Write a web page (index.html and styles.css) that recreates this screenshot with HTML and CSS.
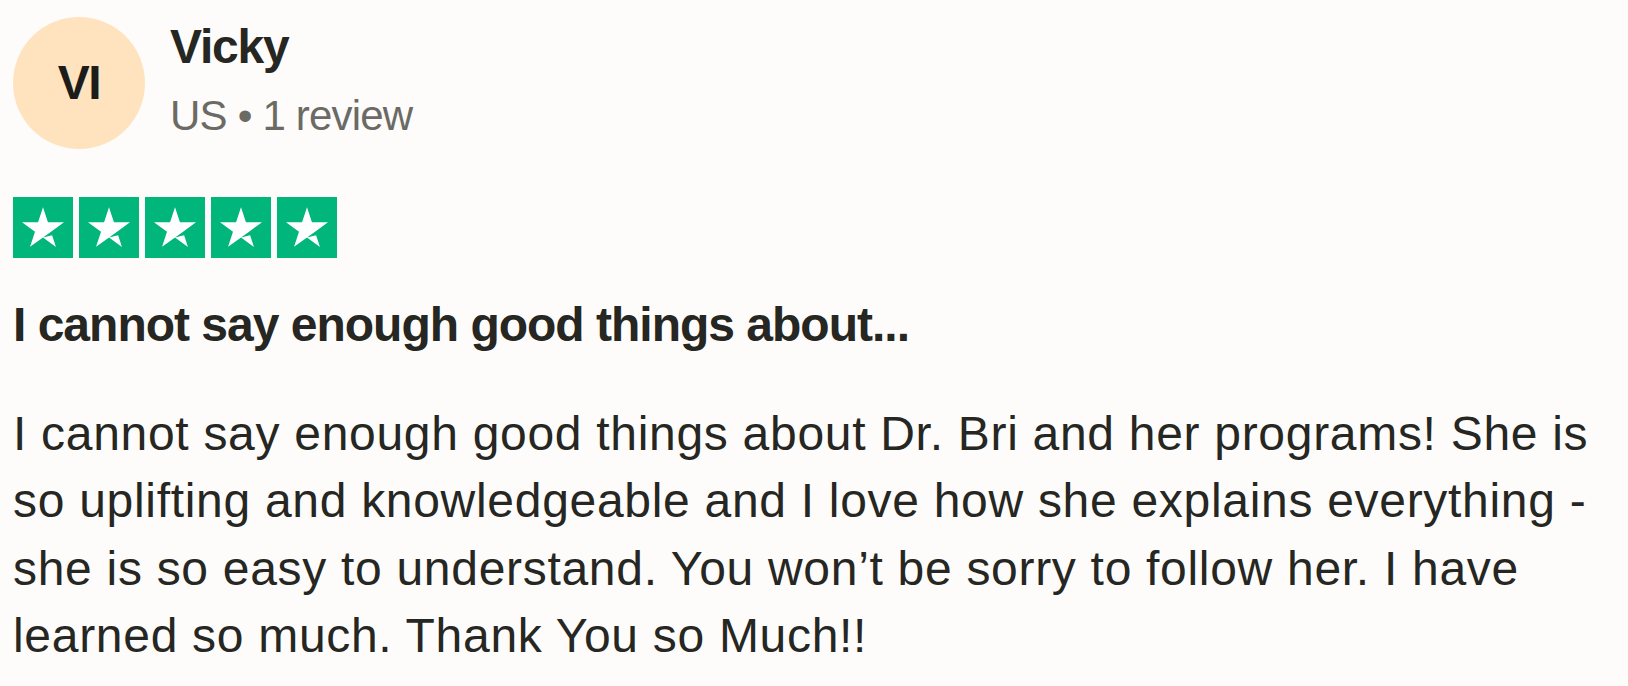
FILE: index.html
```
<!DOCTYPE html>
<html lang="en">
<head>
<meta charset="utf-8">
<title>Review by Vicky</title>
<link rel="stylesheet" href="styles.css">
</head>
<body>
<article class="review">
  <header class="consumer">
    <div class="avatar"><span>VI</span></div>
    <div class="consumer-info">
      <span class="name">Vicky</span>
      <span class="meta">US <span class="dot">•</span> 1 review</span>
    </div>
  </header>
  <div class="stars" aria-label="Rated 5 out of 5 stars">
    <span class="star"><svg viewBox="0 0 96 96"><path d="M48 64.7l14.6-3.7 6.1 18.8L48 64.7zm33.6-24.3H55.9L48 16.2l-7.9 24.2H14.4l20.8 15-7.9 24.2 20.8-15 12.8-9.2 20.7-15z"/></svg></span>
    <span class="star"><svg viewBox="0 0 96 96"><path d="M48 64.7l14.6-3.7 6.1 18.8L48 64.7zm33.6-24.3H55.9L48 16.2l-7.9 24.2H14.4l20.8 15-7.9 24.2 20.8-15 12.8-9.2 20.7-15z"/></svg></span>
    <span class="star"><svg viewBox="0 0 96 96"><path d="M48 64.7l14.6-3.7 6.1 18.8L48 64.7zm33.6-24.3H55.9L48 16.2l-7.9 24.2H14.4l20.8 15-7.9 24.2 20.8-15 12.8-9.2 20.7-15z"/></svg></span>
    <span class="star"><svg viewBox="0 0 96 96"><path d="M48 64.7l14.6-3.7 6.1 18.8L48 64.7zm33.6-24.3H55.9L48 16.2l-7.9 24.2H14.4l20.8 15-7.9 24.2 20.8-15 12.8-9.2 20.7-15z"/></svg></span>
    <span class="star"><svg viewBox="0 0 96 96"><path d="M48 64.7l14.6-3.7 6.1 18.8L48 64.7zm33.6-24.3H55.9L48 16.2l-7.9 24.2H14.4l20.8 15-7.9 24.2 20.8-15 12.8-9.2 20.7-15z"/></svg></span>
  </div>
  <h2 class="title">I cannot say enough good things about...</h2>
  <p class="text">I cannot say enough good things about Dr. Bri and her programs! She is so uplifting and knowledgeable and I love how she explains everything - she is so easy to understand. You won’t be sorry to follow her. I have learned so much. Thank You so Much!!</p>
</article>
</body>
</html>
```

FILE: styles.css
```
html, body {
  margin: 0;
  padding: 0;
  background: #fdfcfa;
}

body {
  font-family: "Liberation Sans", Arial, sans-serif;
  color: #262622;
}

.review {
  padding: 17px 13px 0 13px;
}

.consumer {
  display: flex;
  align-items: flex-start;
  gap: 25px;
}

.avatar {
  width: 132px;
  height: 132px;
  border-radius: 50%;
  background: #ffe3bf;
  display: flex;
  align-items: center;
  justify-content: center;
  flex-shrink: 0;
}

.avatar span {
  font-size: 48px;
  font-weight: 700;
  letter-spacing: -1.5px;
  color: #1c1c1a;
  line-height: 1;
}

.consumer-info {
  display: flex;
  flex-direction: column;
}

.name {
  font-size: 48px;
  font-weight: 700;
  line-height: 60px;
  letter-spacing: -1.2px;
}

.meta {
  margin-top: 10px;
  font-size: 42px;
  line-height: 58px;
  letter-spacing: -0.8px;
  color: #6b6a65;
}

.stars {
  display: flex;
  gap: 6px;
  margin-top: 48px;
}

.star {
  width: 60px;
  height: 61px;
  background: #00b67a;
  display: flex;
}

.star svg {
  width: 60px;
  height: 60px;
  fill: #ffffff;
}

.title {
  margin: 33px 0 0 0;
  font-size: 48px;
  font-weight: 700;
  line-height: 67.2px;
  letter-spacing: -1px;
}

.text {
  margin: 42px 0 0 0;
  font-size: 48px;
  line-height: 67.2px;
  letter-spacing: 0.7px;
}
```
